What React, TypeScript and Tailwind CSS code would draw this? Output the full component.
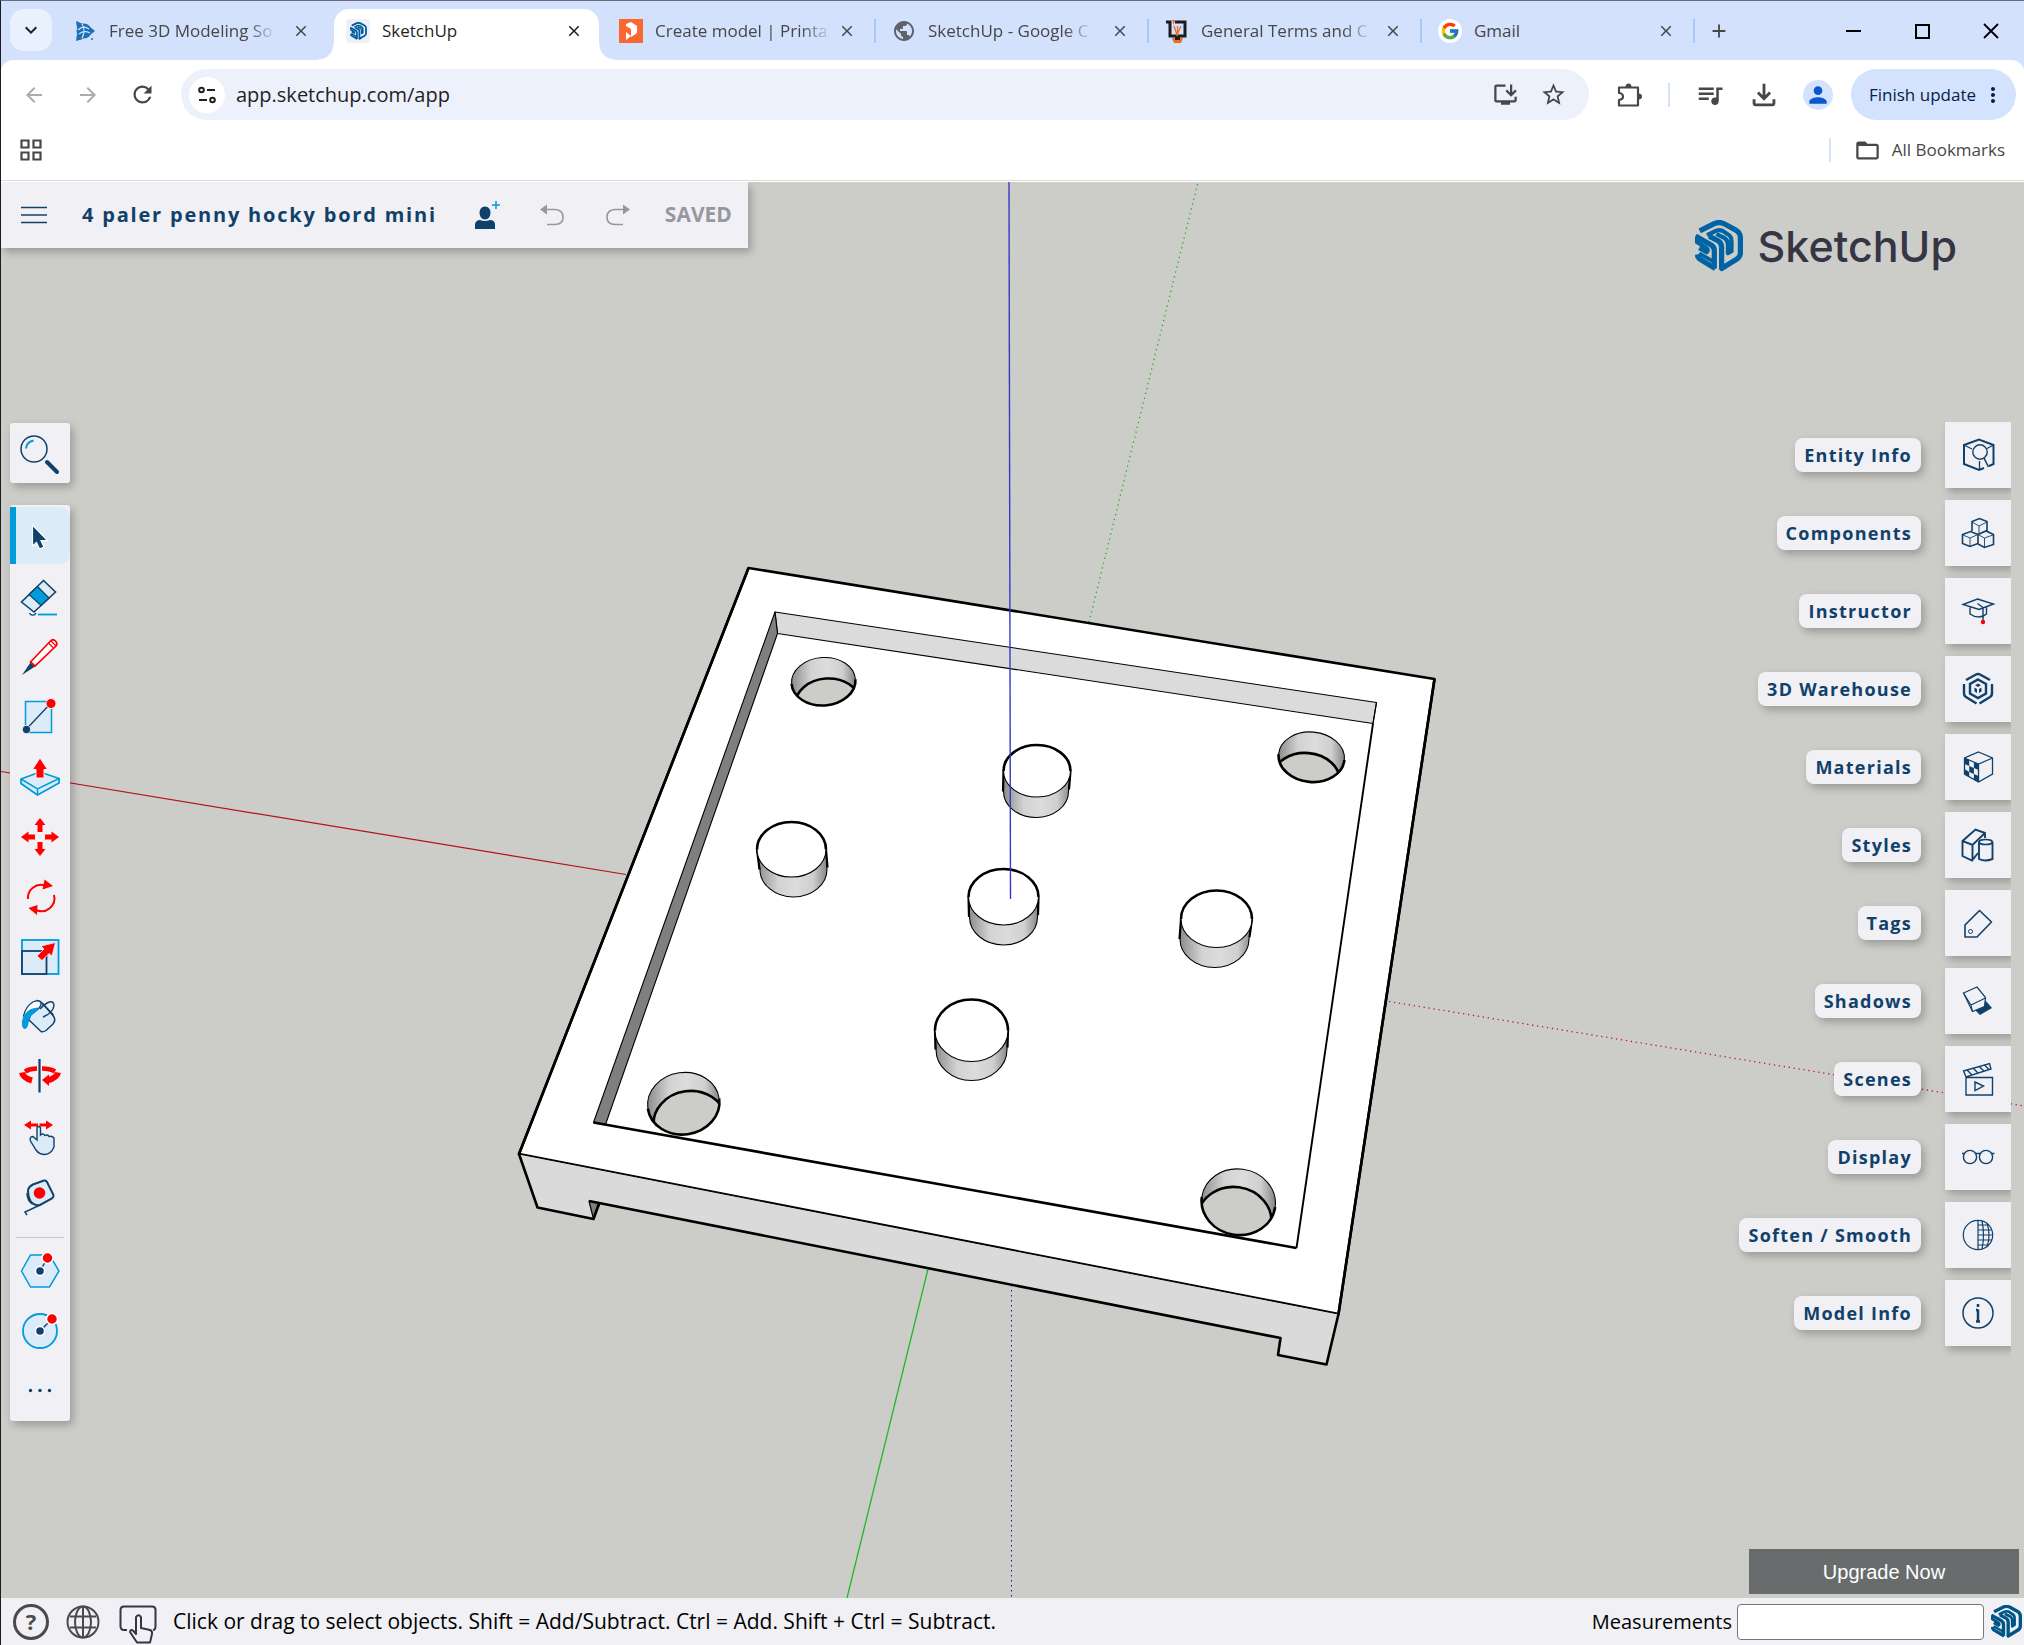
import type { ReactNode } from 'react';
import {
  MdAdd,
  MdArrowBack,
  MdArrowForward,
  MdClose,
  MdFolderOpen,
  MdInstallDesktop,
  MdKeyboardArrowDown,
  MdMoreVert,
  MdOutlineFileDownload,
  MdPerson,
  MdPublic,
  MdQueueMusic,
  MdRefresh,
  MdStarBorder,
} from 'react-icons/md';
import { FcGoogle } from 'react-icons/fc';

const NAVY = '#10416b';
const SKY = '#009bdb';
const PALE = '#dcebf8';
const RED = '#ff0000';

/* ---------- Logos and favicons ---------- */

function SketchUpMark({ className, color }: { className: string; color: string }) {
  return (
    <svg viewBox="0 0 92 98" className={className} fill="none" stroke={color} strokeLinejoin="round" aria-hidden="true">
      <path d="M9 20 L37 6 Q46 2 55 6 L79 19 Q87 24 87 33 V62 Q87 70 79 75 L51 92 V51 Q51 43 44 39 L27 30" strokeWidth="10" />
      <path d="M23 28 L40 20 Q47 17 53 20 L62 26 Q70 30 70 39 V59 L63 63 V46 Q63 38 57 34 L41 26" strokeWidth="8" />
      <path d="M1 30 L31 47 Q37 51 37 57 V92" strokeWidth="10" />
      <path d="M3 32 V41 L22 53 Q27 57 22 61 L8 53" strokeWidth="8" />
      <path d="M4 65 Q5 72 12 76 L39 92" strokeWidth="10" />
      <path d="M8 63 L34 78" strokeWidth="7" />
    </svg>
  );
}

function TrimbleFavicon() {
  return (
    <svg viewBox="0 0 24 24" className="size-6 shrink-0" aria-hidden="true">
      <circle cx="11" cy="12" r="7.500" fill="#1a6fb5" />
      <path d="M3 2 L10 5 L4 9 Z M22 12 L17 8 V16 Z M3 22 L4 15 L10 20 Z" fill="#1a6fb5" />
      <path d="M5 11 Q10 6 16 10 M6 15 Q11 11 17 14 M9 5 Q13 12 9 19" stroke="#d3e1fd" strokeWidth="1.2" fill="none" />
      <circle cx="19" cy="20" r="1" fill="#1a6fb5" />
    </svg>
  );
}

function PrintablesFavicon() {
  return (
    <svg viewBox="0 0 24 24" className="size-6 shrink-0" aria-hidden="true">
      <rect width="24" height="24" fill="#fa6831" />
      <path d="M7 5 L12 3 L18 7 V14 L12 18 V10 L7 7 Z" fill="#fff" />
      <path d="M7 13 L12 17 L7 21 Z" fill="#fff" />
    </svg>
  );
}

function LaserFavicon() {
  return (
    <svg viewBox="0 0 24 24" className="size-6 shrink-0" aria-hidden="true">
      <path d="M1 3 H5 V17 H20 V3 H10" fill="none" stroke="#1c1c1e" strokeWidth="3" />
      <path d="M7 1 H10 L8.500 6 Z" fill="#f06a1d" />
      <path d="M9 7 L12 16 L16 7 M12.500 7 V17" fill="none" stroke="#f06a1d" strokeWidth="1.300" />
      <path d="M7 19 H18 L16 24 H9 Z" fill="#f06a1d" />
      <path d="M10 18 H15 V21 H10 Z" fill="#1c1c1e" />
    </svg>
  );
}

/* ---------- Browser chrome ---------- */

const tabs: { title: string; icon: ReactNode; active?: boolean; divider?: boolean }[] = [
  { title: 'Free 3D Modeling So', icon: <TrimbleFavicon /> },
  {
    title: 'SketchUp',
    active: true,
    icon: (
      <span className="flex size-6 items-center justify-center rounded-sm bg-[#f1f0f5]">
        <SketchUpMark className="h-[18px] w-[17px]" color="#005f9e" />
      </span>
    ),
  },
  { title: 'Create model | Printa', icon: <PrintablesFavicon />, divider: true },
  { title: 'SketchUp - Google C', icon: <MdPublic className="size-6 shrink-0 text-[#5f6368]" />, divider: true },
  { title: 'General Terms and C', icon: <LaserFavicon />, divider: true },
  {
    title: 'Gmail',
    divider: true,
    icon: (
      <span className="flex size-6 items-center justify-center rounded-full bg-white">
        <FcGoogle className="size-5" />
      </span>
    ),
  },
];

function TabStrip() {
  return (
    <div className="flex h-[59px] items-end bg-[#d3e1fd] pl-[9px]">
      <button aria-label="Search tabs" className="mr-[5px] mb-[9px] flex size-[42px] shrink-0 items-center justify-center rounded-[14px] bg-[#e9f1fe]">
        <MdKeyboardArrowDown className="size-6 text-[#1f1f1f]" />
      </button>
      {tabs.map((t) => (
        <div key={t.title} className="relative h-[51px] max-w-[273px] min-w-0 flex-1">
          {t.active && (
            <>
              <span className="absolute inset-x-1 inset-y-0 rounded-t-[15px] bg-white" />
              <span className="absolute bottom-0 -left-3 size-4 bg-[radial-gradient(circle_at_0_0,transparent_15px,#fff_16px)]" />
              <span className="absolute -right-3 bottom-0 size-4 bg-[radial-gradient(circle_at_100%_0,transparent_15px,#fff_16px)]" />
            </>
          )}
          <div className="relative flex h-11 items-center pl-4">
            {t.icon}
            <span className="ml-3 flex min-w-0 flex-1">
              <span
                className={`font-['Open_Sans',sans-serif] text-[17px] whitespace-nowrap ${
                  t.active
                    ? 'text-[#1f1f1f]'
                    : t.title === 'Gmail'
                      ? 'text-[#474747]'
                      : 'text-[#474747] [mask-image:linear-gradient(to_right,black_85%,rgba(0,0,0,0.15))]'
                }`}
              >
                {t.title}
              </span>
            </span>
            <button aria-label={`Close ${t.title}`} className={`mr-[17px] flex size-6 items-center justify-center ${t.active ? 'text-[#1f1f1f]' : 'text-[#474747]'}`}>
              <MdClose className="size-[18px]" />
            </button>
          </div>
          {t.divider && <span className="absolute top-[10px] right-0 h-6 w-0.5 bg-[#a8c7fa]" />}
        </div>
      ))}
      <button aria-label="New tab" className="mb-2 flex h-[42px] w-12 shrink-0 items-center justify-center text-[#474747]">
        <MdAdd className="size-[22px]" />
      </button>
      <div className="mb-2 ml-auto flex shrink-0 gap-[3px] text-black">
        <button aria-label="Minimize" className="flex h-[42px] w-[66px] items-center justify-center">
          <span className="h-0.5 w-[15px] bg-black" />
        </button>
        <button aria-label="Maximize" className="flex h-[42px] w-[66px] items-center justify-center">
          <span className="size-[15px] border-2 border-black" />
        </button>
        <button aria-label="Close window" className="flex h-[42px] w-[66px] items-center justify-center">
          <svg viewBox="0 0 16 16" className="size-4" stroke="#000" strokeWidth="1.8" aria-hidden="true">
            <path d="M1 1 L15 15 M15 1 L1 15" />
          </svg>
        </button>
      </div>
    </div>
  );
}

function NavButton({ label, children }: { label: string; children: ReactNode }) {
  return (
    <button aria-label={label} className="flex h-[51px] w-[54px] shrink-0 items-center justify-center text-[#474747]">
      {children}
    </button>
  );
}

function AddressRow() {
  return (
    <div className="flex items-center py-[9px] pr-2 pl-1.5">
      <NavButton label="Back">
        <MdArrowBack className="size-6 text-[#ababab]" />
      </NavButton>
      <NavButton label="Forward">
        <MdArrowForward className="size-6 text-[#ababab]" />
      </NavButton>
      <NavButton label="Reload">
        <MdRefresh className="size-[27px]" />
      </NavButton>
      <div className="ml-3 flex h-[51px] min-w-0 flex-1 items-center rounded-full bg-[#ecf1fb] pr-[11px] pl-2">
        <button aria-label="View site information" className="flex size-9 shrink-0 items-center justify-center rounded-full bg-white">
          <svg viewBox="0 0 20 20" className="size-5" fill="none" stroke="#1f1f1f" strokeWidth="2" aria-hidden="true">
            <circle cx="4.500" cy="5" r="2.300" />
            <path d="M10 5 H18 M2 15 H10" />
            <circle cx="15.500" cy="15" r="2.300" />
          </svg>
        </button>
        <input
          aria-label="Address and search bar"
          defaultValue="app.sketchup.com/app"
          className="ml-[11px] min-w-0 flex-1 bg-transparent font-['Open_Sans',sans-serif] text-[20px] text-[#1f1f1f] outline-none"
        />
        <button aria-label="Install SketchUp" className="flex w-12 justify-center text-[#474747]">
          <MdInstallDesktop className="size-[27px]" />
        </button>
        <button aria-label="Bookmark this tab" className="flex w-12 justify-center text-[#474747]">
          <MdStarBorder className="size-[27px]" />
        </button>
      </div>
      <div className="ml-[14px] flex items-center">
        <NavButton label="Extensions">
          <svg viewBox="0 0 26 26" className="size-[26px]" fill="none" stroke="#474747" strokeWidth="2.200" strokeLinejoin="round" aria-hidden="true">
            <path d="M2 5.500 H21 V23.500 H2 V18 Q6 17.500 6 14.500 Q6 11.500 2 11 Z" />
            <path d="M8.500 5 A3 3.500 0 0 1 14.500 5 Z M21.500 11.500 A3.500 3 0 0 1 21.500 17.500 Z" fill="#474747" stroke="none" />
          </svg>
        </NavButton>
        <span className="mr-[13px] ml-[11px] h-6 w-0.5 bg-[#d3e3fd]" />
        <NavButton label="Media controls">
          <MdQueueMusic className="size-[30px]" />
        </NavButton>
        <NavButton label="Downloads">
          <MdOutlineFileDownload className="size-[34px]" />
        </NavButton>
        <NavButton label="Profile">
          <span className="flex size-[30px] items-center justify-center rounded-full bg-[#d3e3fd]">
            <MdPerson className="size-[26px] text-[#0b57d0]" />
          </span>
        </NavButton>
        <button className="ml-1.5 flex h-[51px] items-center gap-[5px] rounded-full bg-[#d3e3fd] pr-[11px] pl-[18px] font-['Open_Sans',sans-serif] text-[17px] text-[#041e49]">
          Finish update
          <MdMoreVert className="size-6" />
        </button>
      </div>
    </div>
  );
}

function BookmarksRow() {
  return (
    <div className="mb-[9px] flex h-[42px] items-center pr-[19px] pl-[19px]">
      <button aria-label="Apps">
        <svg viewBox="0 0 22 22" className="size-[22px]" fill="none" stroke="#474747" strokeWidth="2.2" aria-hidden="true">
          <path d="M1.500 1.500 H8.500 V8.500 H1.500 Z M13.500 1.500 H20.500 V8.500 H13.500 Z M1.500 13.500 H8.500 V20.500 H1.500 Z M13.500 13.500 H20.500 V20.500 H13.500 Z" />
        </svg>
      </button>
      <span className="mr-[23px] ml-auto h-6 w-0.5 bg-[#d3e3fd]" />
      <button className="flex items-center gap-[11px] font-['Open_Sans',sans-serif] text-[17px] text-[#474747]">
        <MdFolderOpen className="size-[27px]" />
        All Bookmarks
      </button>
    </div>
  );
}

/* ---------- 3D scene ---------- */

const pegs = [
  { id: 'west', x: 791.5, y: 849.5, rx: 34.5, ry: 27.5, dx: 2, dy: 20 },
  { id: 'north', x: 1037, y: 771, rx: 33.5, ry: 26, dx: -1, dy: 20.5 },
  { id: 'mid', x: 1003.5, y: 897, rx: 35, ry: 28, dx: 0, dy: 20 },
  { id: 'east', x: 1216.5, y: 919, rx: 35.5, ry: 28.5, dx: -2, dy: 20 },
  { id: 'south', x: 971.5, y: 1030.5, rx: 36.5, ry: 31, dx: 0, dy: 19 },
];

const holes = [
  { id: 'nw', x: 823.5, y: 681.5, rx: 32, ry: 24, dx: 4, dy: 21, tilt: -4 },
  { id: 'ne', x: 1311.5, y: 757, rx: 33, ry: 25, dx: -5, dy: 21, tilt: 5 },
  { id: 'sw', x: 683.5, y: 1103.5, rx: 36, ry: 31, dx: 6, dy: 18.5, tilt: -8 },
  { id: 'se', x: 1238.5, y: 1202, rx: 37, ry: 33, dx: -4, dy: 18, tilt: 8 },
];

function Scene() {
  return (
    <svg viewBox="1 182 2023 1416" preserveAspectRatio="xMidYMid slice" className="absolute inset-0 size-full" fill="none" aria-label="3D model view">
      <defs>
        <linearGradient id="wall">
          <stop offset="0" stopColor="#8c8c8c" />
          <stop offset="0.3" stopColor="#d2d2d2" />
          <stop offset="0.55" stopColor="#dcdcdc" />
          <stop offset="0.8" stopColor="#cfcfcf" />
          <stop offset="1" stopColor="#858585" />
        </linearGradient>
        {holes.map((h) => (
          <clipPath key={h.id} id={`hole-${h.id}`}>
            <ellipse cx={h.x} cy={h.y} rx={h.rx} ry={h.ry} transform={`rotate(${h.tilt} ${h.x} ${h.y})`} />
          </clipPath>
        ))}
      </defs>

      <path d="M1 771.500 L626 874.500" stroke="#b4121c" strokeWidth="1.2" />
      <path d="M1389 1001.500 L2024 1106" stroke="#c01722" strokeWidth="1.3" strokeDasharray="1.3 3.7" />
      <path d="M928 1269 L847 1598" stroke="#20b820" strokeWidth="1.3" />
      <path d="M1197.500 184 L1089 622" stroke="#1fae2c" strokeWidth="1.300" strokeDasharray="1.3 3.7" />
      <path d="M1011.500 1285 V1598" stroke="#1414b4" strokeWidth="1" strokeDasharray="1.5 3.5" />

      <g stroke="#000" strokeLinejoin="round">
        <path d="M748.500 568 L1434.500 679 L1338.500 1314 L519 1154 Z" fill="#fff" strokeWidth="2.6" />
        <path
          d="M519 1154 L537.500 1207.500 L593.500 1219 L599 1203.500 L1280.500 1338 L1278 1355 L1326.500 1364.500 L1338.500 1314 Z"
          fill="#dadada"
          stroke="none"
        />
        <path d="M519 1154 L1338.500 1314" strokeWidth="1" />
        <path d="M589 1201 L600 1203.500 L593.500 1219 Z" fill="#7f7f7f" strokeWidth="1.2" />
        <path
          d="M748.500 568 L519 1154 L537.500 1207.500 L593.500 1219 L599 1203.500 M589 1201 L1280.500 1338 L1278 1355 L1326.500 1364.500 L1338.500 1314 L1434.500 679"
          strokeWidth="2.6"
        />
        <path d="M775 612 L1376.500 702.500 L1373 723.500 L777.500 633.500 Z" fill="#dbdbdb" strokeWidth="1.1" />
        <path d="M775 612 L777.500 633.500 L605.500 1124.500 L593.500 1122.500 Z" fill="#7f7f7f" strokeWidth="1.1" />
        <path d="M1376.500 702.500 L1373 723.500" strokeWidth="1.2" />
        <path d="M1373 723.500 L1296.500 1248" strokeWidth="1.9" />
        <path d="M593.500 1122.500 L1296.500 1248" strokeWidth="2.600" />
      </g>

      {holes.map((h) => (
        <g key={h.id} stroke="#000">
          <g clipPath={`url(#hole-${h.id})`}>
            <rect x={h.x - h.rx} y={h.y - h.ry} width={h.rx * 2} height={h.ry * 2} fill="url(#wall)" stroke="none" />
            <ellipse
              cx={h.x + h.dx}
              cy={h.y + h.dy}
              rx={h.rx}
              ry={h.ry}
              fill="#cccdc8"
              strokeWidth="2.6"
              transform={`rotate(${h.tilt} ${h.x + h.dx} ${h.y + h.dy})`}
            />
          </g>
          <g transform={`translate(${h.x} ${h.y}) rotate(${h.tilt})`}>
            <path d={`M${-h.rx} 0 A${h.rx} ${h.ry} 0 0 1 ${h.rx} 0`} strokeWidth="1.1" />
            <path d={`M${-h.rx} 0 A${h.rx} ${h.ry} 0 0 0 ${h.rx} 0`} strokeWidth="2.600" />
          </g>
        </g>
      ))}

      {pegs.map((p) => (
        <g key={p.id} stroke="#000" transform={`translate(${p.x} ${p.y})`}>
          <path d={`M${-p.rx} 0 L${p.dx - p.rx + 1} ${p.dy} A${p.rx - 1} ${p.ry} 0 0 0 ${p.dx + p.rx - 1} ${p.dy} L${p.rx} 0 Z`} fill="url(#wall)" strokeWidth="1.1" />
          <path d={`M${-p.rx} 0 L${p.dx - p.rx + 0.5} ${p.dy} M${p.rx} 0 L${p.dx + p.rx - 0.5} ${p.dy - 2}`} strokeWidth="2.200" />
          <ellipse rx={p.rx} ry={p.ry} fill="#fff" strokeWidth="1.1" />
          <path d={`M${-p.rx} 0 A${p.rx} ${p.ry} 0 0 1 ${p.rx} 0`} strokeWidth="2.6" />
        </g>
      ))}

      <path d="M1009 182 L1010.500 899" stroke="#3a37c4" strokeWidth="1.4" />
    </svg>
  );
}

/* ---------- Left tool palette ---------- */

const tools: { name: string; art: ReactNode }[] = [
  {
    name: 'Select',
    art: <path d="M22.500 18 V39 L26.500 35.500 L29.500 42 L34 40 L31 33.500 H37.500 Z" fill={NAVY} stroke="#fff" strokeWidth="1.200" />,
  },
  {
    name: 'Eraser',
    art: (
      <>
        <path d="M19.500 46 A3.500 3.500 0 0 0 26 46" stroke={NAVY} strokeWidth="1.2" fill="#fff" />
        <path d="M33.500 13.500 L45.500 25 L24 45 L11.500 35 Z" fill={PALE} stroke={NAVY} strokeWidth="1.600" />
        <path d="M27.500 19.500 L39 31 L31 38.500 L19 27.500 Z" fill={SKY} stroke={NAVY} strokeWidth="1.2" />
        <path d="M28 47.500 H47" stroke={SKY} strokeWidth="1.800" />
      </>
    ),
  },
  {
    name: 'Line',
    art: (
      <>
        <path d="M12 48 L20.500 35.500 L25 39.500 Z" fill={NAVY} />
        <path d="M20.500 35 L40.500 14 Q43 11.500 45.500 14 Q48 16.500 46 19 L25 39 Z" fill="#fff" stroke={RED} strokeWidth="1.700" />
        <path d="M38.500 16 L43.500 21 M41 14 L46 19" stroke={RED} strokeWidth="1.200" />
      </>
    ),
  },
  {
    name: 'Rectangle',
    art: (
      <>
        <rect x="15.500" y="14.500" width="26" height="31" fill={PALE} stroke={SKY} strokeWidth="1.500" />
        <path d="M16.500 42 L41 16" stroke={NAVY} strokeWidth="1.300" />
        <circle cx="16.500" cy="42.500" r="4.200" fill={NAVY} stroke="#f1f0f5" />
        <circle cx="41" cy="16.500" r="5" fill={RED} stroke="#f1f0f5" />
      </>
    ),
  },
  {
    name: 'Push/Pull',
    art: (
      <>
        <path d="M11 32 L30 25 L49 31.500 V36 L27.500 48 L11 36.500 Z" fill={PALE} stroke={SKY} strokeWidth="1.800" strokeLinejoin="round" />
        <path d="M11 32 L27.500 42 L49 31.500 M27.500 42 V48" stroke={SKY} strokeWidth="1.500" />
        <path d="M30 11 L37.500 22.500 H34 V31 H26 V22.500 H22.500 Z" fill={RED} stroke="#f1f0f5" />
      </>
    ),
  },
  {
    name: 'Move',
    art: (
      <path
        d="M30 11 L35.500 18 H32.500 V25 H27.500 V18 H24.500 Z M30 49 L35.500 42 H32.500 V35 H27.500 V42 H24.500 Z M11 30 L18.500 24.500 V27.500 H25 V32.500 H18.500 V35.500 Z M49 30 L41.500 24.500 V27.500 H35 V32.500 H41.500 V35.500 Z"
        fill={RED}
      />
    ),
  },
  {
    name: 'Rotate',
    art: (
      <>
        <path d="M18 32 A13 13 0 0 1 35 18.500 M44 28 A13 13 0 0 1 26 43" stroke={RED} strokeWidth="2" />
        <path d="M34.500 12.500 L43 19 L32.500 22.500 Z M27.500 38 L27 48 L18.500 41 Z" fill={RED} />
      </>
    ),
  },
  {
    name: 'Scale',
    art: (
      <>
        <rect x="12" y="13" width="36.500" height="34" fill={PALE} stroke={SKY} strokeWidth="1.800" />
        <rect x="12" y="24" width="24.500" height="23" fill={PALE} stroke={NAVY} strokeWidth="1.800" />
        <path d="M45.500 15.500 L42 29 L39 26.500 L32 33.500 L27 29 L34 22 L31 19 Z" fill={RED} stroke="#f1f0f5" strokeWidth="0.800" />
      </>
    ),
  },
  {
    name: 'Paint',
    art: (
      <>
        <path d="M19 33 L31 44.500 Q33 45.500 36 43.500 L43 37 Q46.500 33 43 28.500 L32 16 Q30 13.500 27 13.500 L22 20 Z" fill={PALE} stroke={NAVY} strokeWidth="1.500" />
        <path d="M13.500 29 Q16 19 23 15 Q28 12.500 31 15.500 Q31.500 19 27 23 L17 31 Z" fill="#fff" stroke={NAVY} strokeWidth="1.300" />
        <path d="M28.500 20.500 Q24 20.500 21 22 Q13.500 26 12 34 Q11.500 42 15 42 Q18 41 18.500 36 Q20 28.500 24.500 25.500 Q28 23 28.500 20.500 Z" fill={SKY} />
        <path d="M33 30 Q43 26 44 18.500 Q43.500 13 38 15.500 Q33 18 30 22 M32 16 L43.500 28" stroke={NAVY} strokeWidth="1.500" />
      </>
    ),
  },
  {
    name: 'Orbit',
    art: (
      <>
        <path d="M15 24.500 Q20 21.500 27 21.500 M32 21.500 Q40 21.500 45 24.500" stroke={RED} strokeWidth="4.500" />
        <path d="M12 25.500 Q13 31 22 33.500 M48 25.500 Q47 31 37 33.500" stroke={RED} strokeWidth="6" />
        <path d="M32 33 L39 27.500 V39 Z" fill={RED} />
        <path d="M29.500 12 V45.500" stroke={NAVY} strokeWidth="2.200" />
      </>
    ),
  },
  {
    name: 'Pan',
    art: (
      <>
        <path d="M14 18 L21 13.500 V16.500 H28 V19.500 H21 V22.500 Z M43 18 L36 13.500 V16.500 H29.500 V19.500 H36 V22.500 Z" fill={RED} />
        <path
          d="M27 20.500 Q28.500 18.500 30.500 20.500 V28 Q33 26 35 28.500 Q37.500 27 39 29.500 Q42 28.500 44 31 V40 Q41 47 35 47.500 Q29 47.500 26 43 L20.500 34 Q19 30 23 29.500 L27 33 Z"
          fill={PALE}
          stroke={NAVY}
          strokeWidth="1.400"
        />
      </>
    ),
  },
  {
    name: 'Tape Measure',
    art: (
      <>
        <path d="M18 24 Q18 20 23 17.500 L34 13.500 Q36 13 37 15 L43.500 28 Q44 30 42 31.500 L30 38 Q24 39 20.500 34 Q18 30 18 24 Z" fill={PALE} stroke={NAVY} strokeWidth="2" />
        <path d="M17 26 Q17 33 22 37 M18.500 33 L25 38 M30 38 L15 45 L17 48" stroke={NAVY} strokeWidth="1.500" />
        <circle cx="29.500" cy="26" r="5.800" fill={RED} />
      </>
    ),
  },
];

const shapeTools: { name: string; art: ReactNode }[] = [
  {
    name: 'Polygon',
    art: (
      <>
        <path d="M11.500 30 L20.500 14 H39.500 L49 30 L39.500 46 H20.500 Z" fill={PALE} stroke={SKY} strokeWidth="1.500" />
        <path d="M30 30 L37.500 17" stroke={NAVY} strokeWidth="1.500" />
        <circle cx="30" cy="30" r="4.500" fill={NAVY} stroke="#fff" strokeWidth="1.500" />
        <circle cx="37.500" cy="17" r="5.500" fill={RED} stroke="#fff" strokeWidth="1.500" />
      </>
    ),
  },
  {
    name: 'Circle',
    art: (
      <>
        <circle cx="30" cy="30" r="17" fill={PALE} stroke={SKY} strokeWidth="1.800" />
        <path d="M30 30 L42 18" stroke={NAVY} strokeWidth="1.500" />
        <circle cx="30" cy="30" r="4.500" fill={NAVY} stroke="#fff" strokeWidth="1.500" />
        <circle cx="42" cy="18" r="5.500" fill={RED} stroke="#fff" strokeWidth="1.500" />
      </>
    ),
  },
  {
    name: 'More tools',
    art: (
      <g fill={NAVY}>
        <circle cx="20.500" cy="29.500" r="1.700" />
        <circle cx="30" cy="29.500" r="1.700" />
        <circle cx="39.500" cy="29.500" r="1.700" />
      </g>
    ),
  },
];

function ToolIcon({ children }: { children: ReactNode }) {
  return (
    <svg viewBox="0 0 60 60" className="size-[60px] shrink-0" fill="none" aria-hidden="true">
      {children}
    </svg>
  );
}

function ToolPalette() {
  return (
    <div className="ml-[9px] flex flex-col gap-[22px] pt-px">
      <button aria-label="Search" className="size-[60px] rounded-[3px] bg-[#f1f0f5] shadow-[3px_4px_8px_rgba(0,0,0,0.25)]">
        <ToolIcon>
          <circle cx="24" cy="26" r="13" stroke={NAVY} strokeWidth="1.500" />
          <path d="M16 25.500 Q16.500 19 23.500 17.500" stroke={SKY} strokeWidth="2" />
          <path d="M37 39 L47 49" stroke={NAVY} strokeWidth="4" strokeLinecap="round" />
        </ToolIcon>
      </button>
      <div className="w-[60px] rounded-[3px] bg-[#f1f0f5] pt-0.5 shadow-[3px_4px_8px_rgba(0,0,0,0.25)]">
        {tools.map((t, i) => (
          <button
            key={t.name}
            aria-label={t.name}
            className={i === 0 ? 'mb-[3px] flex h-[57px] w-[60px] rounded-r-[10px] bg-[#dcebf8] shadow-[inset_6px_0_0_#009bdb]' : 'flex h-[60px] w-[60px]'}
          >
            <ToolIcon>{t.art}</ToolIcon>
          </button>
        ))}
        <div className="mx-1.5 mt-[10px] mb-[3px] h-px bg-[#c6c7cb]" />
        {shapeTools.map((t) => (
          <button key={t.name} aria-label={t.name} className="flex h-[60px] w-[60px]">
            <ToolIcon>{t.art}</ToolIcon>
          </button>
        ))}
      </div>
    </div>
  );
}

/* ---------- Right panel stack ---------- */

const panels: { name: string; art: ReactNode }[] = [
  {
    name: 'Entity Info',
    art: (
      <>
        <path d="M39 46 L34 48 L19 42 V23 L34 17.500 L48.500 23 V42 L44 44" strokeWidth="2" />
        <path d="M19 23 L27 27 M48.500 23 L42 26.500 M34.500 39 V47" strokeWidth="1.300" />
        <circle cx="35" cy="30" r="7.200" strokeWidth="1.400" />
        <path d="M39 36 L43.500 45" strokeWidth="1.600" />
      </>
    ),
  },
  {
    name: 'Components',
    art: (
      <>
        <path d="M27 31 V21.500 L34.500 18.500 L42 21.500 V31" />
        <path d="M33 34.500 L25.500 31.500 L17.500 34.500 V43.500 L25 46.500 L33 43.500 Z" />
        <path d="M33 34.500 L41 31 L48.500 34.500 V44.500 L39.500 47.500 L33 44" />
        <path d="M27 22 L34 26 L42 22 M34 26 V34 M18 35 L25 38 L33 34.500 L39.500 38 L48 35 M25 38 V46 M39.500 38 V47" strokeWidth="0.900" />
      </>
    ),
  },
  {
    name: 'Instructor',
    art: (
      <>
        <path d="M32.500 21 L48.500 26 L34 31.500 L18 26.500 Z M25 29.500 V36 Q29 39 34 39 Q39 38.500 41.500 36 V29" strokeWidth="1.400" />
        <path d="M32.500 25.500 L38 29.500 V42" strokeWidth="1.400" />
        <circle cx="38" cy="44" r="2.200" fill={RED} stroke="none" />
      </>
    ),
  },
  {
    name: '3D Warehouse',
    art: (
      <>
        <path d="M21 24 L31 18.500 Q33 17.500 35 18.500 L45 24 M47 28 V37 Q47 40 45 41 L34.500 47.500 M31.500 47.500 L21 41 Q19 40 19 37 V28" strokeWidth="2.400" />
        <path d="M33 23.500 L41 28 V37.500 L33 42 L25 37.500 V28 Z" strokeWidth="2.400" />
        <path d="M33 27.500 L36 29.200 L33 31 L30 29.200 Z M29.500 31.500 L32 33 V37 L29.500 35.500 Z M36.500 31.500 L34 33 V37 L36.500 35.500 Z" fill={NAVY} stroke="none" />
      </>
    ),
  },
  {
    name: 'Materials',
    art: (
      <>
        <path d="M33.500 18 L47.500 24 V40 L33.500 48 L19.500 40 V24 Z M19.500 24 L33.500 30 L47.500 24 M33.500 30 V48" strokeWidth="1.300" />
        <path
          d="M19.500 24 L24.200 26 V32 L19.500 30 Z M28.900 28 L33.500 30 V36 L28.900 34 Z M24.200 32 L28.900 34 V40 L24.200 38 Z M19.500 35 L24.200 38 V43 L19.500 40 Z M28.900 40 L33.500 42 V48 L28.900 45.500 Z"
          fill={NAVY}
          stroke="none"
        />
      </>
    ),
  },
  {
    name: 'Styles',
    art: (
      <>
        <path d="M33 41 L27 48.500 L17.500 44 V29 L30.500 17.500 L40 21 V26 M17.500 29 L27.500 33 L40 21 M27.500 33 V48" strokeWidth="1.900" />
        <path d="M34 30 V47 Q40 50 47.500 47 V30" strokeWidth="1.900" />
        <ellipse cx="40.700" cy="30" rx="6.700" ry="2.500" strokeWidth="1.700" />
      </>
    ),
  },
  {
    name: 'Tags',
    art: (
      <>
        <path d="M34.500 20.500 L46.500 32 L32 47 H20 V35 Z" strokeLinejoin="round" strokeWidth="1.600" />
        <circle cx="25.500" cy="41.500" r="2" strokeWidth="1" />
      </>
    ),
  },
  {
    name: 'Shadows',
    art: (
      <>
        <path d="M40 32 L47 40 L35 47 L30 42 Z" fill={NAVY} stroke="none" />
        <path d="M18.500 25 L32 19 L40.500 29.500 L39.500 38.500 L27.500 43.500 Z" fill="#f1f0f5" strokeWidth="1.200" />
        <path d="M18.500 25 L26 37 L40.500 30 M26 37 L27.500 43.500" strokeWidth="1.100" />
      </>
    ),
  },
  {
    name: 'Scenes',
    art: (
      <>
        <path d="M21 31.500 H47.500 V49 H21 Z M18.500 25 L44.500 17.500 L46 23 L21 31 Z M30 36 L38.500 40 L30 44.500 Z" strokeWidth="1.400" />
        <path d="M22 24 L27 29 M28 22 L33 27 M34 20.500 L39 25 M39.500 19 L44 23.500" strokeWidth="1.400" />
      </>
    ),
  },
  {
    name: 'Display',
    art: (
      <>
        <circle cx="25" cy="33" r="6.600" strokeWidth="1.400" />
        <circle cx="41" cy="33" r="6.600" strokeWidth="1.400" />
        <path d="M17 29.500 H20 M30.500 29.500 H35.500 M46 29.500 H49.500" strokeWidth="1.500" />
      </>
    ),
  },
  {
    name: 'Soften / Smooth',
    art: (
      <>
        <circle cx="33" cy="33" r="14.700" strokeWidth="1.200" />
        <path d="M33 18.500 V47.500 M33 23 H44 M33 28 H47 M33 33 H47.500 M33 38 H47 M33 43 H44 M37 19 Q40 33 37 47 M42 21 Q46 33 42 45" strokeWidth="1.200" />
      </>
    ),
  },
  {
    name: 'Model Info',
    art: (
      <>
        <circle cx="33" cy="33" r="15" strokeWidth="1.500" />
        <path d="M33 29.500 V41.500 M31 30 H33 M31 41.500 H35 M33 24 V27" strokeWidth="2.500" />
      </>
    ),
  },
];

function PanelStack() {
  return (
    <div className="mr-[13px] flex flex-col items-end gap-3 overflow-hidden pb-3 pl-3">
      {panels.map((p) => (
        <button key={p.name} className="flex items-center gap-6">
          <span className="flex h-[34px] items-center rounded-lg bg-[#f1f0f5] px-[9px] font-['Open_Sans',sans-serif] text-[18px] font-bold tracking-[0.07em] text-[#10416b] shadow-[3px_4px_8px_rgba(0,0,0,0.25)]">
            {p.name}
          </span>
          <span className="size-[66px] bg-[#f1f0f5] shadow-[3px_4px_8px_rgba(0,0,0,0.25)]">
            <svg viewBox="0 0 66 66" className="size-full" fill="none" stroke={NAVY} strokeWidth="1.600" aria-hidden="true">
              {p.art}
            </svg>
          </span>
        </button>
      ))}
    </div>
  );
}

/* ---------- Document bar, logo, footer ---------- */

function DocumentBar() {
  return (
    <div className="flex h-[66px] items-center bg-[#f1f0f5] pr-4 pl-5 font-['Open_Sans',sans-serif] shadow-[3px_4px_8px_rgba(0,0,0,0.25)]">
      <button aria-label="Menu">
        <svg viewBox="0 0 26 18" className="h-[18px] w-[26px]" stroke={NAVY} strokeWidth="1.500" aria-hidden="true">
          <path d="M0 1.500 H26 M0 9 H26 M0 16.500 H26" />
        </svg>
      </button>
      <h1 className="ml-[35px] text-[20px] font-bold tracking-[0.09em] text-[#10416b]">4 paler penny hocky bord mini</h1>
      <button aria-label="Share" className="ml-9">
        <svg viewBox="0 0 28 30" className="h-[30px] w-7" aria-hidden="true">
          <path d="M12 6.500 Q17.500 7 17.500 13 Q17 19 12 19.500 Q7 19 6.500 13 Q6.500 7 12 6.500 Z" fill={NAVY} />
          <path d="M2 29 V24 Q3 20 7 20 Q12 22 17 20 Q21.500 20 22 24 V29 Z" fill={NAVY} />
          <path d="M23 1 V9 M19 5 H27" stroke={SKY} strokeWidth="1.500" />
        </svg>
      </button>
      <button aria-label="Undo" className="ml-[38px]">
        <svg viewBox="0 0 26 22" className="h-[22px] w-[26px]" fill="none" stroke="#96979f" strokeWidth="1.600" aria-hidden="true">
          <path d="M6 5.500 H16 Q24 6 24 13 Q24 20.500 16 20.500 H8" />
          <path d="M1 5.500 L8 0.500 V10.500 Z" fill="#96979f" stroke="none" />
        </svg>
      </button>
      <button aria-label="Redo" className="ml-10">
        <svg viewBox="0 0 26 22" className="h-[22px] w-[26px]" fill="none" stroke="#96979f" strokeWidth="1.600" aria-hidden="true">
          <path d="M20 5.500 H10 Q2 6 2 13 Q2 20.500 10 20.500 H18" />
          <path d="M25 5.500 L18 0.500 V10.500 Z" fill="#96979f" stroke="none" />
        </svg>
      </button>
      <span className="ml-[34px] text-[21px] font-bold text-[#96979f]">SAVED</span>
    </div>
  );
}

function StatusBar() {
  return (
    <footer className="flex h-[47px] shrink-0 items-center bg-[#f1f0f5] pr-0.5 pl-3 font-['Open_Sans',sans-serif] text-[20px] text-black">
      <button aria-label="Help" className="flex size-9 items-center justify-center rounded-full border-3 border-[#4a4a4c] text-[22px] font-bold text-[#4a4a4c]">
        ?
      </button>
      <button aria-label="Language" className="ml-4">
        <svg viewBox="0 0 36 36" className="size-9" fill="none" stroke="#4a4a4c" strokeWidth="2" aria-hidden="true">
          <circle cx="18" cy="18" r="15.500" />
          <ellipse cx="18" cy="18" rx="8" ry="15.500" />
          <path d="M18 2.500 V33.500 M5 12.500 H31 M5 23.500 H31" />
        </svg>
      </button>
      <button aria-label="Touch mode" className="ml-[18px] pt-1">
        <svg viewBox="0 0 38 40" className="h-10 w-[38px]" fill="none" stroke="#363545" strokeWidth="2" strokeLinejoin="round" aria-hidden="true">
          <path d="M8 26 H5 Q1.500 26 1.500 22 V6 Q1.500 2.500 5 2.500 H33 Q36.500 2.500 36.500 6 V22 Q36.500 26 34 26" />
          <path d="M17 30 V13 Q19.500 9.500 22 13 V24 L31 26 Q33.500 27 33 30 L31 38.500 H18 L11 28 Q11.500 24.500 14.500 27 Z" fill="#f1f0f5" />
        </svg>
      </button>
      <p className="ml-4 text-[21px] whitespace-nowrap">Click or drag to select objects. Shift = Add/Subtract. Ctrl = Add. Shift + Ctrl = Subtract.</p>
      <label htmlFor="measurements" className="ml-auto">
        Measurements
      </label>
      <input id="measurements" type="text" className="ml-[5px] h-9 w-[247px] rounded-[4px] border border-[#767676] bg-white px-2" />
      <SketchUpMark className="ml-[7px] h-[33px] w-[31px] shrink-0" color="#005587" />
    </footer>
  );
}

export default function App() {
  return (
    <div className="flex h-screen min-h-fit flex-col border-t border-l border-t-[#6b6c80] border-l-[#1c1c22] bg-[#d3e1fd]">
      <TabStrip />
      <div className="shrink-0 rounded-t-xl bg-white pb-px">
        <AddressRow />
        <BookmarksRow />
        <div className="h-px bg-[#dcdcdc]" />
      </div>
      <main className="relative flex flex-1 flex-col overflow-hidden bg-[#cccdc8]">
        <Scene />
        <div className="relative flex items-start justify-between">
          <DocumentBar />
          <div className="mt-[38px] mr-[67px] flex h-[52px] items-center gap-[15px]">
            <SketchUpMark className="h-[52px] w-12" color="#0063a3" />
            <span className="font-['Inter',sans-serif] text-[43px] leading-[52px] font-medium text-[#363545]">SketchUp</span>
          </div>
        </div>
        <div className="relative mt-[150px] flex items-start justify-between">
          <ToolPalette />
          <PanelStack />
        </div>
        <button className="relative mt-auto mr-[5px] mb-1 flex h-[45px] w-[270px] items-center justify-center self-end bg-[#686c6d] font-['Liberation_Sans',sans-serif] text-[20px] text-white">
          Upgrade Now
        </button>
      </main>
      <StatusBar />
    </div>
  );
}
